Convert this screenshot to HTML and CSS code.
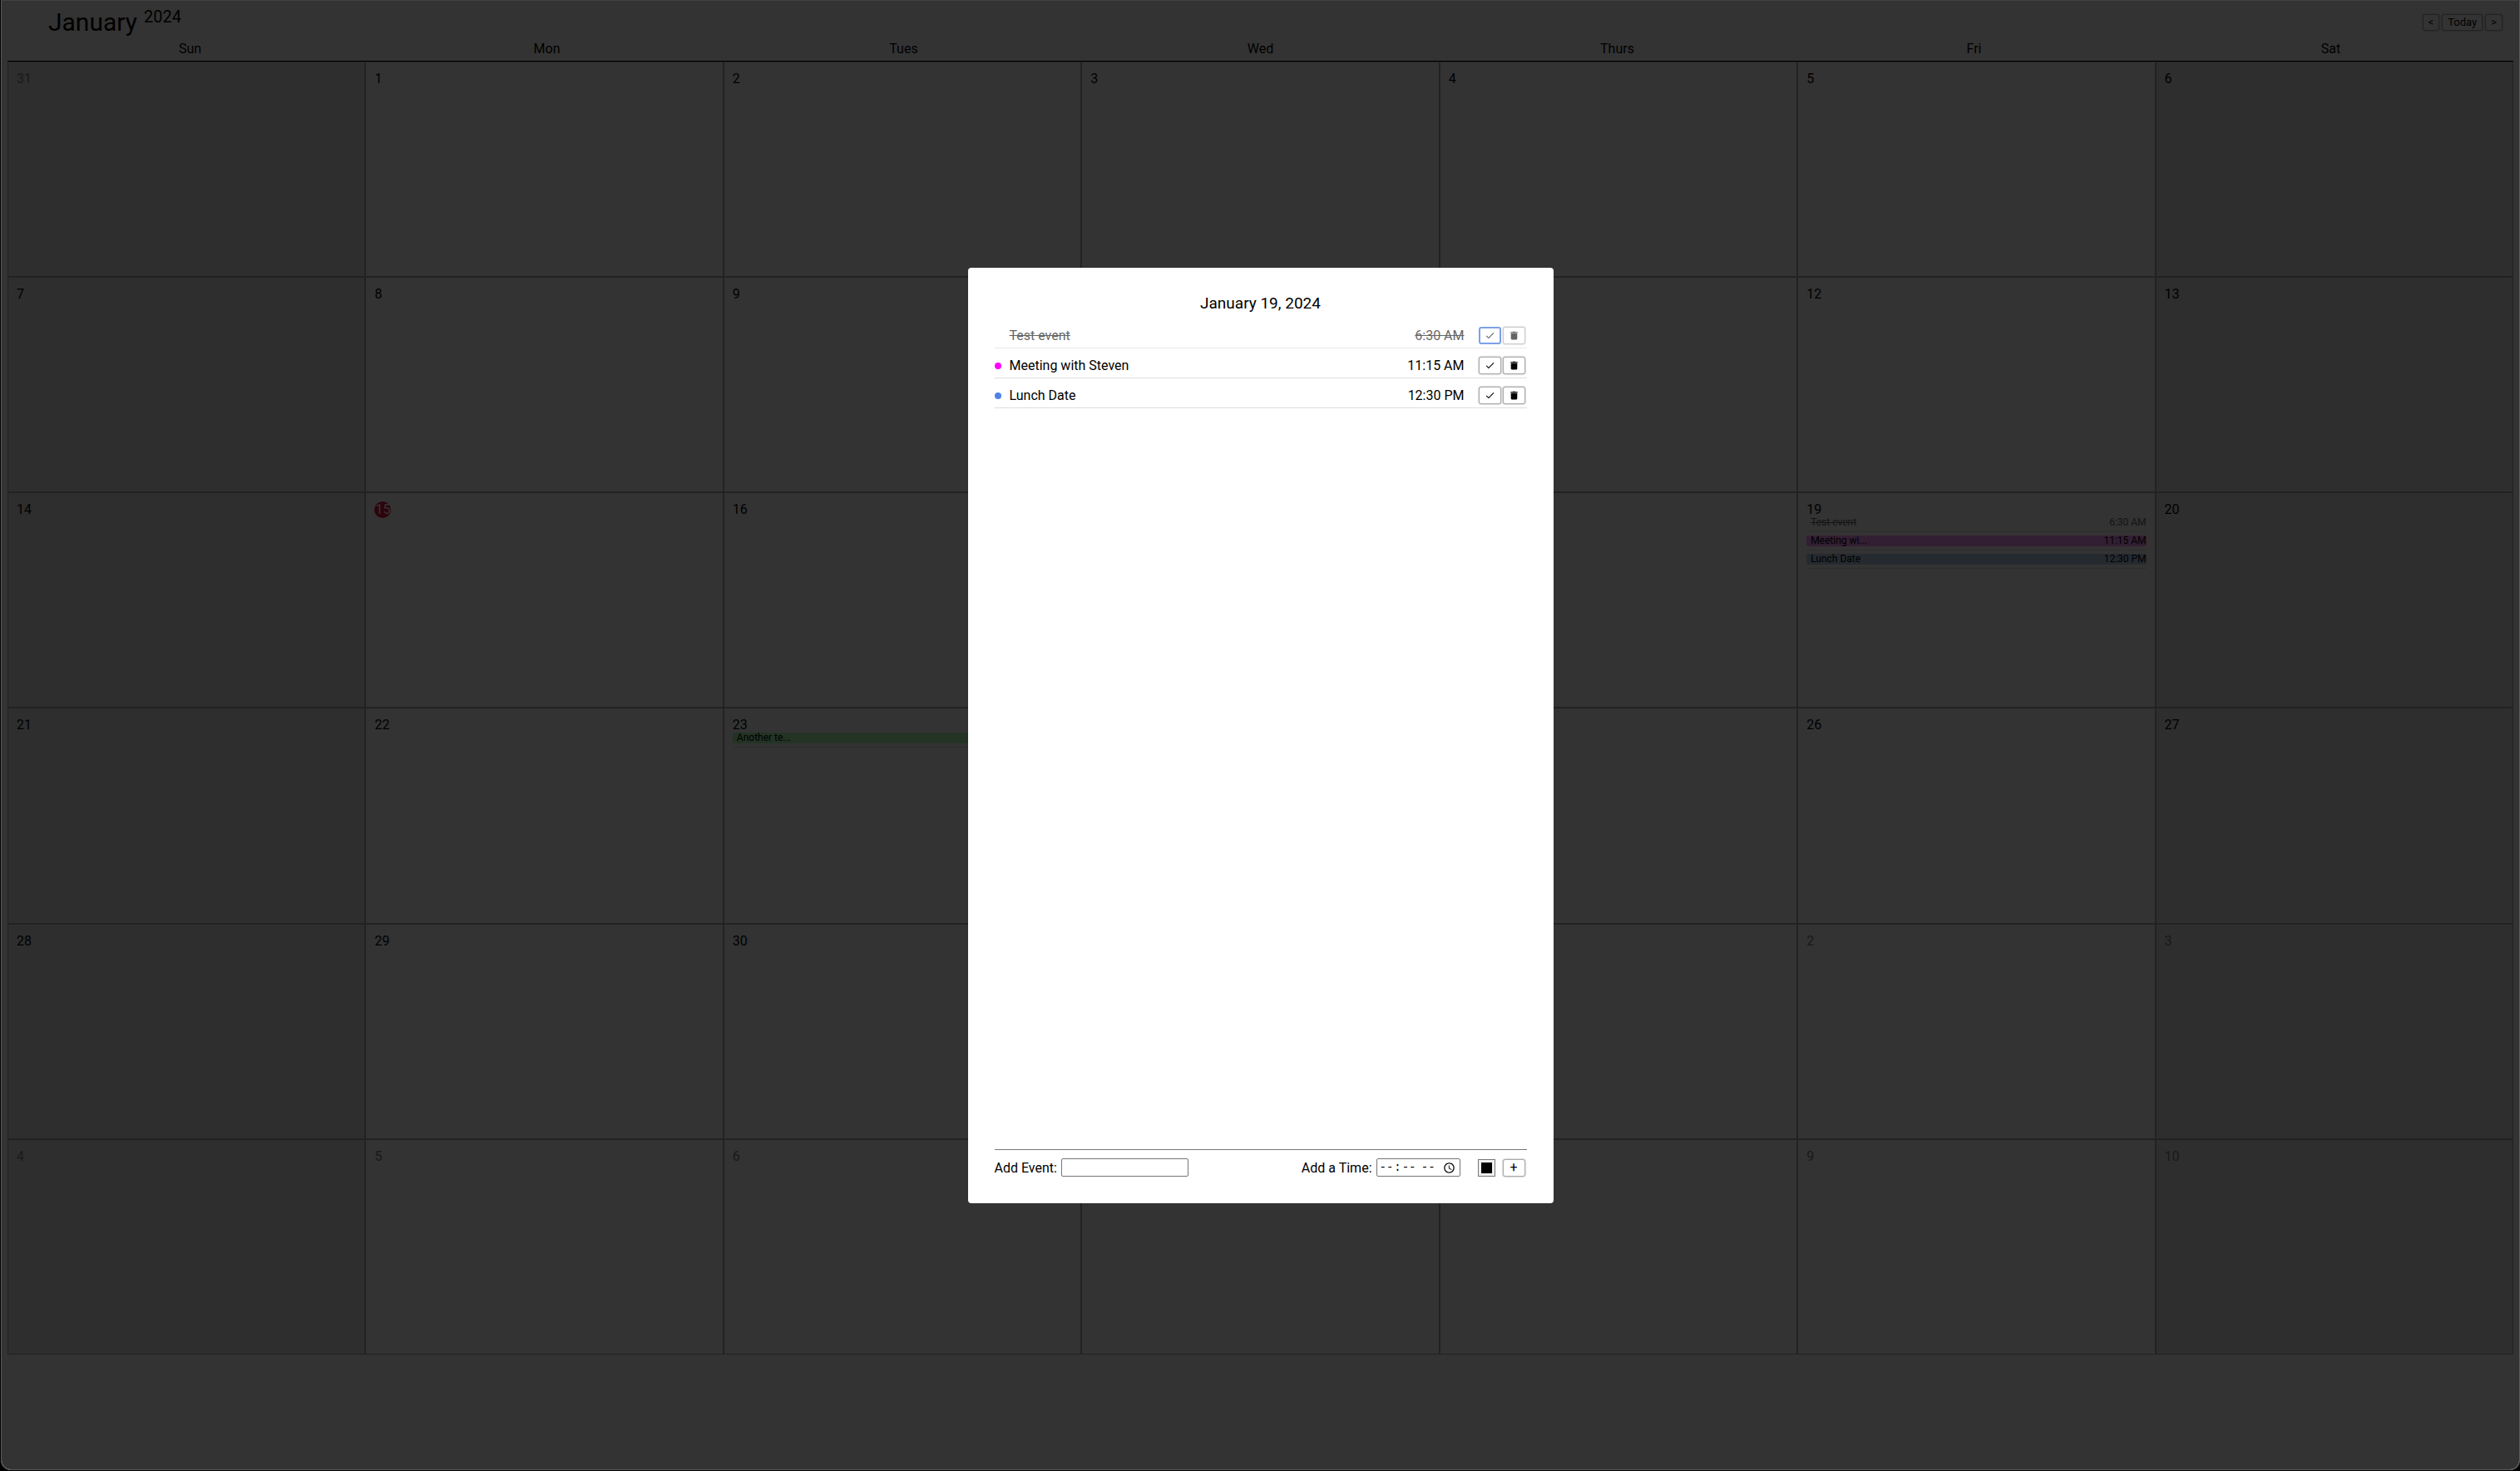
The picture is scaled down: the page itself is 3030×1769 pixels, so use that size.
FILE: index.html
```html
<!DOCTYPE html>
<html lang="en">
<head>
<meta charset="utf-8">
<title>Calendar</title>
<link rel="stylesheet" href="styles.css">
</head>
<body>
<svg class="sprite">
  <symbol id="check" viewBox="0 0 24 24"><path d="M9 16.17 4.83 12l-1.42 1.41L9 19 21 7l-1.41-1.41z"/></symbol>
  <symbol id="trash" viewBox="0 0 24 24"><path d="M5 19c0 1.1.9 2 2 2h10c1.100 0 2-.9 2-2V7H5v12zM20 4h-4.500l-1-1h-5l-1 1H4v2h16V4z"/></symbol>
</svg>
<div class="window">
  <main class="calendar">
    <header class="topbar">
      <h1 class="month">January <span class="year">2024</span></h1>
      <nav class="nav">
        <button class="btn nav-btn" type="button">&lt;</button>
        <button class="btn nav-btn" type="button">Today</button>
        <button class="btn nav-btn" type="button">&gt;</button>
      </nav>
    </header>
    <div class="weekdays">
      <span>Sun</span><span>Mon</span><span>Tues</span><span>Wed</span><span>Thurs</span><span>Fri</span><span>Sat</span>
    </div>
    <div class="days">
      <div class="day weekend other"><span class="num">31</span></div>
      <div class="day"><span class="num">1</span></div>
      <div class="day"><span class="num">2</span></div>
      <div class="day"><span class="num">3</span></div>
      <div class="day"><span class="num">4</span></div>
      <div class="day"><span class="num">5</span></div>
      <div class="day weekend"><span class="num">6</span></div>

      <div class="day weekend"><span class="num">7</span></div>
      <div class="day"><span class="num">8</span></div>
      <div class="day"><span class="num">9</span></div>
      <div class="day"><span class="num">10</span></div>
      <div class="day"><span class="num">11</span></div>
      <div class="day"><span class="num">12</span></div>
      <div class="day weekend"><span class="num">13</span></div>

      <div class="day weekend"><span class="num">14</span></div>
      <div class="day"><span class="num today">15</span></div>
      <div class="day"><span class="num">16</span></div>
      <div class="day"><span class="num">17</span></div>
      <div class="day"><span class="num">18</span></div>
      <div class="day">
        <span class="num">19</span>
        <ul class="events">
          <li class="event done"><div class="bar"><span class="name">Test event</span><span>6:30 AM</span></div></li>
          <li class="event"><div class="bar pink"><span class="name">Meeting wi...</span><span>11:15 AM</span></div></li>
          <li class="event"><div class="bar blue"><span class="name">Lunch Date</span><span>12:30 PM</span></div></li>
        </ul>
      </div>
      <div class="day weekend"><span class="num">20</span></div>

      <div class="day weekend"><span class="num">21</span></div>
      <div class="day"><span class="num">22</span></div>
      <div class="day">
        <span class="num">23</span>
        <ul class="events">
          <li class="event"><div class="bar green"><span class="name">Another te...</span></div></li>
        </ul>
      </div>
      <div class="day"><span class="num">24</span></div>
      <div class="day"><span class="num">25</span></div>
      <div class="day"><span class="num">26</span></div>
      <div class="day weekend"><span class="num">27</span></div>

      <div class="day weekend"><span class="num">28</span></div>
      <div class="day"><span class="num">29</span></div>
      <div class="day"><span class="num">30</span></div>
      <div class="day"><span class="num">31</span></div>
      <div class="day other"><span class="num">1</span></div>
      <div class="day other"><span class="num">2</span></div>
      <div class="day weekend other"><span class="num">3</span></div>

      <div class="day weekend other"><span class="num">4</span></div>
      <div class="day other"><span class="num">5</span></div>
      <div class="day other"><span class="num">6</span></div>
      <div class="day other"><span class="num">7</span></div>
      <div class="day other"><span class="num">8</span></div>
      <div class="day other"><span class="num">9</span></div>
      <div class="day weekend other"><span class="num">10</span></div>
    </div>
  </main>

  <div class="overlay">
    <section class="modal" role="dialog" aria-labelledby="modal-title">
      <h2 class="modal-title" id="modal-title">January 19, 2024</h2>
      <ul class="agenda">
        <li class="item finished">
          <span class="dot"></span><span class="item-name">Test event</span><span class="item-time">6:30 AM</span>
          <button class="btn icon-btn active" type="button" aria-label="Mark as done"><svg class="icon"><use href="#check"/></svg></button>
          <button class="btn icon-btn" type="button" aria-label="Delete"><svg class="icon"><use href="#trash"/></svg></button>
        </li>
        <li class="item">
          <span class="dot dot-pink"></span><span class="item-name">Meeting with Steven</span><span class="item-time">11:15 AM</span>
          <button class="btn icon-btn" type="button" aria-label="Mark as done"><svg class="icon"><use href="#check"/></svg></button>
          <button class="btn icon-btn" type="button" aria-label="Delete"><svg class="icon"><use href="#trash"/></svg></button>
        </li>
        <li class="item">
          <span class="dot dot-blue"></span><span class="item-name">Lunch Date</span><span class="item-time">12:30 PM</span>
          <button class="btn icon-btn" type="button" aria-label="Mark as done"><svg class="icon"><use href="#check"/></svg></button>
          <button class="btn icon-btn" type="button" aria-label="Delete"><svg class="icon"><use href="#trash"/></svg></button>
        </li>
      </ul>
      <form class="add">
        <label for="event-name">Add Event:</label>
        <input class="field name-field" id="event-name" type="text">
        <label class="time-label" for="event-time">Add a Time:</label>
        <input class="field time-field" id="event-time" type="time">
        <input class="color-field" type="color" value="#000000" aria-label="Event color">
        <button class="btn icon-btn add-btn" type="submit">+</button>
      </form>
    </section>
  </div>
</div>
</body>
</html>
```
FILE: styles.css
```css
* {
  box-sizing: border-box;
}

body {
  margin: 0;
  background: #000;
  color: #000;
  font: 16px/19px Roboto, sans-serif;
}

h1, h2, ul {
  margin: 0;
  padding: 0;
  font-weight: 400;
  list-style: none;
}

.sprite {
  display: none;
}

.window {
  position: relative;
  min-height: calc(100vh - 1px);
  margin-left: 1px;
  border: 1px solid #5a5a5a;
  border-top-color: #414141;
  border-radius: 0 0 12px 12px;
  background: #fff;
  overflow: hidden;
}

/* Month view */
.calendar {
  padding: 0 7px;
}

.topbar {
  display: flex;
  justify-content: space-between;
  align-items: center;
  padding: 8px 13px 5px 49px;
}

.month {
  display: flex;
  gap: 8px;
  font-size: 30px;
  line-height: 35px;
}

.year {
  font-size: 20px;
  line-height: 23px;
}

.nav {
  display: flex;
  gap: 3px;
}

.btn {
  padding: 0;
  border: 1px solid #aaa;
  border-radius: 3px;
  background: #fff;
  box-shadow: 0 0 2px #888;
  color: #000;
  font: 13px/18px Roboto, sans-serif;
}

.nav-btn {
  min-width: 20px;
  height: 20px;
  padding: 0 6px;
}

.weekdays {
  display: grid;
  grid-template-columns: repeat(7, 1fr);
  padding: 0 5px 5px;
  border-bottom: 1px solid #000;
  text-align: center;
}

.days {
  display: grid;
  grid-template-columns: repeat(7, minmax(0, 1fr));
  grid-template-rows: repeat(6, 1fr);
  min-height: 1555px;
}

.day {
  padding: 10px;
  border: 1px solid #aaa;
}

.weekend {
  background: #e6e6e6;
}

.other {
  color: #808080;
}

.num {
  display: block;
}

.today {
  width: 20px;
  height: 20px;
  border-radius: 50%;
  background: #dc143c;
  color: #fff;
  text-align: center;
}

.event {
  padding-bottom: 4px;
  margin-bottom: 4px;
  border-bottom: 1px solid #e2e2e2;
}

.bar {
  display: flex;
  justify-content: space-between;
  padding-left: 5px;
  border-radius: 2px;
  font-size: 12px;
  line-height: 13px;
}

.done {
  color: #666;
}

.done .name {
  text-decoration: line-through;
}

.pink {
  background: #ff9cff;
}

.blue {
  background: #b8d2f0;
}

.green {
  background: #b0ffb4;
}

/* Day dialog */
.overlay {
  position: absolute;
  inset: 0;
  display: flex;
  justify-content: center;
  align-items: center;
  padding-top: 1px;
  background: rgba(0, 0, 0, 0.8);
}

.modal {
  display: flex;
  flex-direction: column;
  box-sizing: content-box;
  width: 640px;
  max-width: 90%;
  height: 60vh;
  padding: 32px;
  border-radius: 4px;
  background: #fff;
}

.modal-title {
  font-size: 19px;
  line-height: 22px;
  text-align: center;
}

.agenda {
  flex: 1;
  padding-top: 7px;
}

.item {
  display: flex;
  align-items: center;
  height: 36px;
  padding: 7px 2px 0 0;
  border-bottom: 1px solid #ddd;
}

.finished {
  opacity: 0.6;
}

.dot {
  width: 8px;
  height: 8px;
  margin-right: 10px;
  border-radius: 50%;
}

.dot-pink {
  background: #f0f;
}

.dot-blue {
  background: #4f83e9;
}

.item-name {
  flex: 1;
}

.item-time {
  margin-right: 17px;
}

.finished .item-name,
.finished .item-time {
  text-decoration: line-through;
}

.icon-btn {
  width: 27px;
  height: 21px;
}

.item .icon-btn + .icon-btn {
  margin-left: 2px;
}

.active {
  border: 2px solid #2463d8;
  box-shadow: none;
}

.icon {
  display: block;
  width: 13px;
  height: 13px;
  margin: 0 auto;
}

.add {
  display: flex;
  align-items: center;
  padding: 10px 2px 0 0;
  border-top: 1px solid #777;
}

.field {
  height: 22px;
  margin: 0 0 0 5px;
  padding: 1px 2px;
  border: 1px solid #767676;
  border-radius: 2px;
  background: #fff;
}

.name-field {
  width: 153px;
  font: 13px Roboto, sans-serif;
}

.time-label {
  margin-left: auto;
}

.time-field {
  width: 101px;
  font: 14px "Liberation Mono", monospace;
}

.time-field::-webkit-calendar-picker-indicator {
  margin-left: 0;
}

.color-field {
  width: 21px;
  height: 21px;
  margin: 0 9px 0 21px;
  padding: 3px;
  border: 1px solid #767676;
  background: #efefef;
}

.add-btn {
  font-size: 16px;
}

.color-field::-webkit-color-swatch-wrapper {
  padding: 0;
}

.color-field::-webkit-color-swatch {
  border: 0;
}
```
